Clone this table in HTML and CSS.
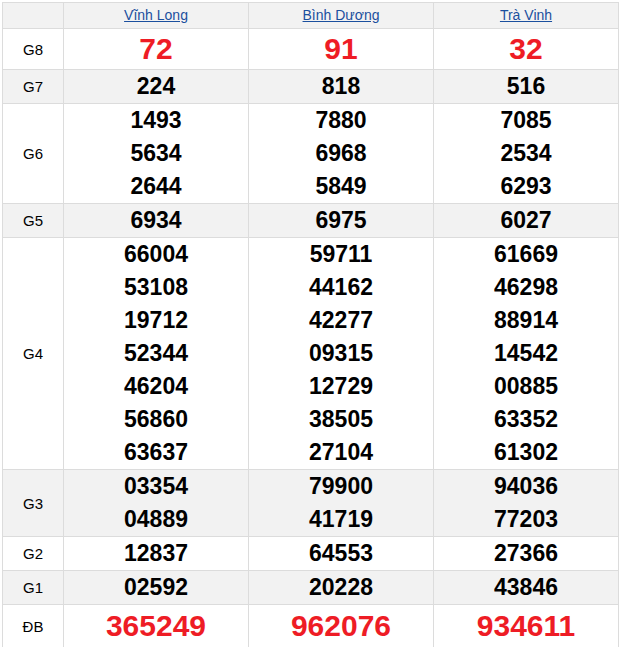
FILE: index.html
```html
<!DOCTYPE html>
<html lang="vi">
<head>
<meta charset="utf-8">
<title>Kết quả xổ số</title>
<link rel="stylesheet" href="styles.css">
</head>
<body>
<div class="wrap">
<table class="kq">
  <colgroup>
    <col class="c-label"><col class="c-prov"><col class="c-prov"><col class="c-prov">
  </colgroup>
  <thead>
    <tr class="head">
      <th></th>
      <th><a href="#">Vĩnh Long</a></th>
      <th><a href="#">Bình Dương</a></th>
      <th><a href="#">Trà Vinh</a></th>
    </tr>
  </thead>
  <tbody>
    <tr class="big">
      <td class="lbl">G8</td>
      <td><div class="n red">72</div></td>
      <td><div class="n red">91</div></td>
      <td><div class="n red">32</div></td>
    </tr>
    <tr class="alt">
      <td class="lbl">G7</td>
      <td><div class="n">224</div></td>
      <td><div class="n">818</div></td>
      <td><div class="n">516</div></td>
    </tr>
    <tr>
      <td class="lbl">G6</td>
      <td><div class="n">1493</div><div class="n">5634</div><div class="n">2644</div></td>
      <td><div class="n">7880</div><div class="n">6968</div><div class="n">5849</div></td>
      <td><div class="n">7085</div><div class="n">2534</div><div class="n">6293</div></td>
    </tr>
    <tr class="alt">
      <td class="lbl">G5</td>
      <td><div class="n">6934</div></td>
      <td><div class="n">6975</div></td>
      <td><div class="n">6027</div></td>
    </tr>
    <tr>
      <td class="lbl">G4</td>
      <td><div class="n">66004</div><div class="n">53108</div><div class="n">19712</div><div class="n">52344</div><div class="n">46204</div><div class="n">56860</div><div class="n">63637</div></td>
      <td><div class="n">59711</div><div class="n">44162</div><div class="n">42277</div><div class="n">09315</div><div class="n">12729</div><div class="n">38505</div><div class="n">27104</div></td>
      <td><div class="n">61669</div><div class="n">46298</div><div class="n">88914</div><div class="n">14542</div><div class="n">00885</div><div class="n">63352</div><div class="n">61302</div></td>
    </tr>
    <tr class="alt">
      <td class="lbl">G3</td>
      <td><div class="n">03354</div><div class="n">04889</div></td>
      <td><div class="n">79900</div><div class="n">41719</div></td>
      <td><div class="n">94036</div><div class="n">77203</div></td>
    </tr>
    <tr>
      <td class="lbl">G2</td>
      <td><div class="n">12837</div></td>
      <td><div class="n">64553</div></td>
      <td><div class="n">27366</div></td>
    </tr>
    <tr class="alt">
      <td class="lbl">G1</td>
      <td><div class="n">02592</div></td>
      <td><div class="n">20228</div></td>
      <td><div class="n">43846</div></td>
    </tr>
    <tr class="big db">
      <td class="lbl">ĐB</td>
      <td><div class="n red">365249</div></td>
      <td><div class="n red">962076</div></td>
      <td><div class="n red">934611</div></td>
    </tr>
  </tbody>
</table>
</div>
</body>
</html>
```
FILE: styles.css
```css
html, body {
  margin: 0;
  padding: 0;
  background: #fff;
}
.wrap {
  padding: 2px 0 0 2px;
}
.kq {
  border-collapse: collapse;
  table-layout: fixed;
  width: 617px;
  font-family: "Liberation Sans", Arial, sans-serif;
  color: #000;
}
.c-label { width: 61px; }
.c-prov { width: 185px; }
.kq th, .kq td {
  border: 1px solid #dcdcdc;
  padding: 0;
  text-align: center;
  vertical-align: middle;
}
.head th {
  background: #f2f2f2;
  height: 25px;
  line-height: 25px;
  font-weight: normal;
  font-size: 14px;
}
.head a {
  color: #1b4f9e;
  text-decoration: underline;
}
.lbl {
  font-size: 15px;
  color: #000;
}
.alt td {
  background: #f2f2f2;
}
.n {
  font-size: 23px;
  font-weight: bold;
  line-height: 33px;
}
.big .n {
  line-height: 40px;
}
.db .n {
  line-height: 42px;
}
.red {
  color: #ee1c25;
  font-size: 30px;
}
```
